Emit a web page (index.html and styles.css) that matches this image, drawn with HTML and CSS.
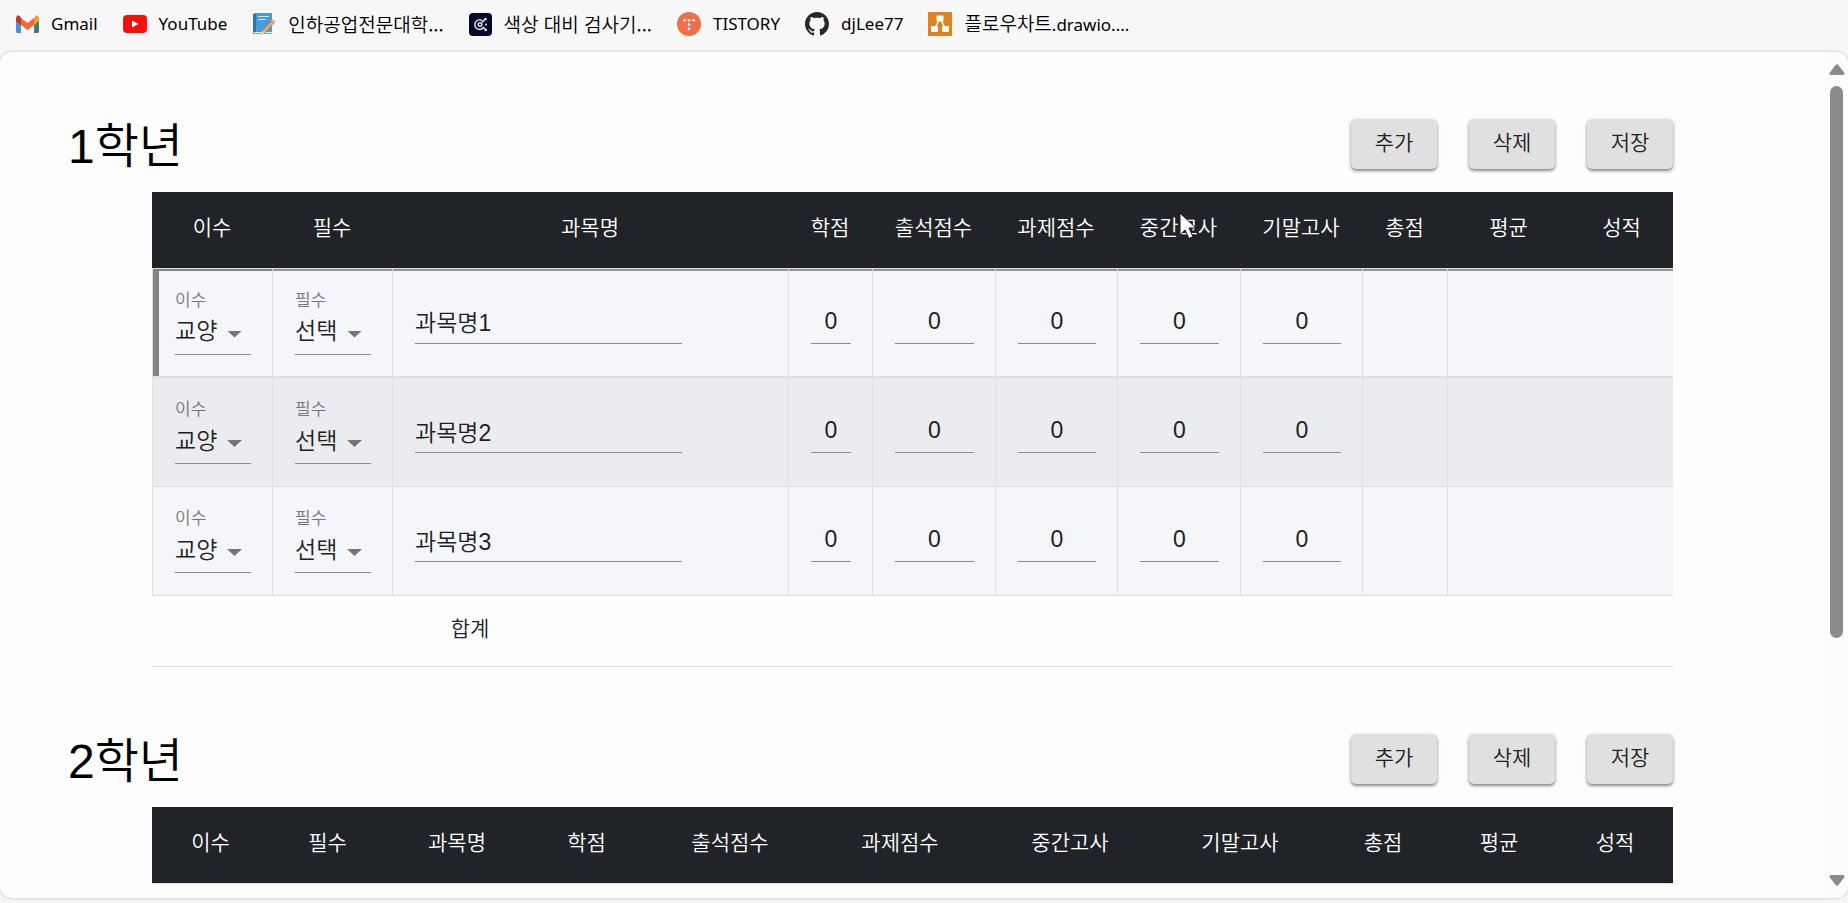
FILE: index.html
```html
<!DOCTYPE html>
<html lang="ko">
<head>
<meta charset="utf-8">
<title>학점 관리</title>
<link rel="stylesheet" href="styles.css">
</head>
<body>
<nav class="bookmarks" aria-label="북마크">
  <a href="#"><svg width="23" height="18" viewBox="0 0 23 18"><path fill="#4a8fd8" d="M0 3v13.500q0 1.500 1.500 1.500H5V7z"/><path fill="#4c7a72" d="M23 3v13.500q0 1.500-1.500 1.500H18V7z"/><path fill="#c5311f" d="M0 3v3l5 4V3L3.500 1Q1-1 0 3z"/><path fill="#f0a02a" d="M23 3v3l-5 4V3l1.500-2Q22-1 23 3z"/><path fill="#ee6a3b" d="M5 3l6.500 5L18 3v7l-6.500 5L5 10z"/></svg><span>Gmail</span></a>
  <a href="#"><svg width="24" height="18" viewBox="0 0 24 18"><rect width="24" height="18" rx="4" fill="#fb0f0c"/><path fill="#fff" d="M9 5.500v7l6.500-3.500z"/></svg><span>YouTube</span></a>
  <a href="#" class="ko"><svg width="24" height="24" viewBox="0 0 24 24"><path fill="#4a9ad8" d="M1 2l2-1h17v21H1z"/><path fill="#2f76ad" d="M1 2h3v18H1z"/><path fill="#e6f2fa" d="M2 20h18v1.200H2z"/><path stroke="#d5eaf8" d="M6 4.500h11M6 7.500h8"/><path fill="#e9863a" d="M20 8l3 2.500L12.500 21.500l-4 2L10 19z"/><path stroke="#fbe3c8" d="M20.500 10.500L11.500 20"/><path fill="#f5dcc0" d="M10 19l2.500 2.500-4 2z"/><path fill="#b9bcc0" d="M19 9l1.800-2 3 2.500-1.800 2z"/></svg><span>인하공업전문대학...</span></a>
  <a href="#" class="ko"><svg width="23" height="23" viewBox="0 0 23 23"><rect width="23" height="23" rx="4" fill="#07082a"/><g fill="none" stroke="#e8e8ee" stroke-width="1.400"><path d="M13.500 7.800A4.800 4.800 0 1 0 14.500 14.500L16.500 16.500"/><path d="M13 9.500l3.200-3.200"/><circle cx="11" cy="11.500" r="1.800"/></g><circle cx="16.500" cy="6" r="1.200" fill="#e8e8ee"/><circle cx="17" cy="11.500" r="1" fill="#e8e8ee"/><circle cx="16.800" cy="17" r="1.200" fill="#e8e8ee"/></svg><span>색상 대비 검사기...</span></a>
  <a href="#"><svg width="24" height="24" viewBox="0 0 24 24"><circle cx="12" cy="12" r="12" fill="#ed704b"/><g fill="#fff"><circle cx="7.500" cy="8.300" r="1.300"/><circle cx="12" cy="8.300" r="1.300"/><circle cx="16.500" cy="8.300" r="1.300"/><circle cx="12" cy="12.500" r="1.300"/><circle cx="12" cy="16.700" r="1.300"/></g></svg><span>TISTORY</span></a>
  <a href="#"><svg width="24" height="24" viewBox="0 0 16 16"><path fill="#24292e" d="M8 0C3.580 0 0 3.580 0 8c0 3.540 2.290 6.530 5.470 7.590.4.070.55-.17.55-.38 0-.19-.01-.82-.01-1.490-2.010.37-2.530-.49-2.690-.94-.09-.23-.48-.94-.82-1.130-.28-.15-.68-.52-.01-.53.63-.01 1.080.58 1.230.82.72 1.210 1.870.87 2.330.66.07-.52.28-.87.51-1.070-1.780-.2-3.640-.89-3.640-3.950 0-.87.31-1.590.82-2.150-.08-.2-.36-1.020.08-2.120 0 0 .67-.21 2.200.82.64-.18 1.320-.27 2-.27s1.360.09 2 .27c1.530-1.040 2.200-.82 2.200-.82.44 1.100.16 1.920.08 2.120.51.56.82 1.270.82 2.150 0 3.070-1.870 3.750-3.650 3.950.29.25.54.73.54 1.480 0 1.070-.01 1.930-.01 2.200 0 .21.15.46.55.38A8.010 8.010 0 0016 8c0-4.420-3.580-8-8-8z"/></svg><span>djLee77</span></a>
  <a href="#" class="mixed"><svg width="24" height="24" viewBox="0 0 24 24"><rect width="24" height="24" rx="1" fill="#e3801f"/><path stroke="#fff" stroke-width="1.500" d="M11 8l-4 8M13 8l4 8"/><g fill="#fff"><rect x="8.500" y="3.500" width="7" height="6" rx="1"/><rect x="3" y="14" width="7" height="6" rx="1"/><rect x="14" y="14" width="7" height="6" rx="1"/></g></svg><span><span class="hangul">플로우차트</span>.drawio....</span></a>
</nav>

<div class="panel">
  <main class="content">
    <section class="year">
      <header class="year-head">
        <h1>1학년</h1>
        <div class="actions"><button type="button">추가</button><button type="button">삭제</button><button type="button">저장</button></div>
      </header>
      <table class="grades">
        <colgroup><col class="w-select"><col class="w-select"><col><col class="w-credit"><col class="w-score"><col class="w-exam"><col class="w-score"><col class="w-exam"><col class="w-total"><col class="w-score"><col class="w-grade"></colgroup>
        <thead><tr><th>이수</th><th>필수</th><th>과목명</th><th>학점</th><th>출석점수</th><th>과제점수</th><th>중간고사</th><th>기말고사</th><th>총점</th><th>평균</th><th>성적</th></tr></thead>
        <tbody>
          <tr class="active">
            <td><label class="pick"><span>이수</span><select><option>교양</option><option>전공</option></select></label></td>
            <td><label class="pick"><span>필수</span><select><option>선택</option><option>필수</option></select></label></td>
            <td><input class="name" aria-label="과목명" value="과목명1"></td>
            <td><input aria-label="학점" value="0"></td><td><input aria-label="출석점수" value="0"></td><td><input aria-label="과제점수" value="0"></td><td><input aria-label="중간고사" value="0"></td><td><input aria-label="기말고사" value="0"></td>
            <td></td><td colspan="2"></td>
          </tr>
          <tr>
            <td><label class="pick"><span>이수</span><select><option>교양</option><option>전공</option></select></label></td>
            <td><label class="pick"><span>필수</span><select><option>선택</option><option>필수</option></select></label></td>
            <td><input class="name" aria-label="과목명" value="과목명2"></td>
            <td><input aria-label="학점" value="0"></td><td><input aria-label="출석점수" value="0"></td><td><input aria-label="과제점수" value="0"></td><td><input aria-label="중간고사" value="0"></td><td><input aria-label="기말고사" value="0"></td>
            <td></td><td colspan="2"></td>
          </tr>
          <tr>
            <td><label class="pick"><span>이수</span><select><option>교양</option><option>전공</option></select></label></td>
            <td><label class="pick"><span>필수</span><select><option>선택</option><option>필수</option></select></label></td>
            <td><input class="name" aria-label="과목명" value="과목명3"></td>
            <td><input aria-label="학점" value="0"></td><td><input aria-label="출석점수" value="0"></td><td><input aria-label="과제점수" value="0"></td><td><input aria-label="중간고사" value="0"></td><td><input aria-label="기말고사" value="0"></td>
            <td></td><td colspan="2"></td>
          </tr>
        </tbody>
        <tfoot><tr><td colspan="3">합계</td><td colspan="8"></td></tr></tfoot>
      </table>
    </section>

    <section class="year">
      <header class="year-head">
        <h1>2학년</h1>
        <div class="actions"><button type="button">추가</button><button type="button">삭제</button><button type="button">저장</button></div>
      </header>
      <table class="grades">
        <colgroup><col class="e-short"><col class="e-short"><col><col class="e-short"><col class="e-score"><col class="e-score"><col class="e-score"><col class="e-score"><col class="e-last"><col class="e-last"><col class="e-last"></colgroup>
        <thead><tr><th>이수</th><th>필수</th><th>과목명</th><th>학점</th><th>출석점수</th><th>과제점수</th><th>중간고사</th><th>기말고사</th><th>총점</th><th>평균</th><th>성적</th></tr></thead>
      </table>
    </section>
  </main>
  <div class="scrollbar" aria-hidden="true">
    <svg width="16" height="11" viewBox="0 0 16 11"><path fill="#8a8c8b" d="M6.500 1.200q1.500-1.700 3 0l5.700 7.300q1 2-1 2.500H1.800q-2-.5-1-2.500z"/></svg>
    <div class="track"><div class="thumb"></div></div>
    <svg width="16" height="11" viewBox="0 0 16 11"><path fill="#8a8c8b" d="M6.500 9.800q1.500 1.700 3 0l5.700-7.300q1-2-1-2.500H1.800q-2 .5-1 2.500z"/></svg>
  </div>
</div>
<svg class="cursor" width="19" height="28" viewBox="0 0 19 28"><path fill="#fff" stroke="#16181c" d="M1 1v22l5-5 4 8.500 4-2-4-8.500h7z"/></svg>
</body>
</html>
```

FILE: styles.css
```css
* { box-sizing: border-box; }

body {
  margin: 0;
  height: 100vh;
  padding-bottom: 5px;
  display: flex;
  flex-direction: column;
  overflow: hidden;
  background: #f6f6f6;
  color: #212121;
  font-family: "Liberation Sans", "Noto Sans CJK KR", sans-serif;
  font-weight: 350;
}

.bookmarks {
  height: 52px;
  padding: 0 16px 4px;
  display: flex;
  align-items: center;
  gap: 25px;
  background: #f7f7f7;
  font: 400 17px/24px "Noto Sans", "Noto Sans CJK KR", sans-serif;
}
.bookmarks a {
  display: flex;
  align-items: center;
  gap: 12px;
  color: #000;
  text-decoration: none;
  white-space: nowrap;
}
.bookmarks .ko,
.bookmarks .hangul {
  font-family: "Noto Sans CJK KR", sans-serif;
  font-size: 19px;
  font-weight: 350;
}

.panel {
  flex: 1;
  min-height: 0;
  display: flex;
  overflow: hidden;
  border-radius: 12px;
  background: #fdfdfd;
  box-shadow: 0 0 3px rgba(0, 0, 0, 0.25);
}
.content { flex: 1; min-width: 0; }

.year { padding: 67px 152px 0 68px; }
.year-head {
  height: 50px;
  margin-bottom: 23px;
  display: flex;
  align-items: center;
  justify-content: space-between;
}
h1 {
  margin: 0;
  padding-top: 6px;
  color: #000;
  font-size: 48px;
  font-weight: inherit;
  line-height: 50px;
}
.actions { display: flex; gap: 32px; }
.actions button {
  width: 86px;
  height: 50px;
  padding: 0 0 6px;
  border: 0;
  border-radius: 5px;
  background: #e0e0e0;
  box-shadow: 0 2px 3px rgba(0, 0, 0, 0.4), 0 1px 5px rgba(0, 0, 0, 0.12);
  color: #212121;
  font: inherit;
  font-size: 21px;
}

.grades {
  width: calc(100% - 84px);
  margin-left: 84px;
  table-layout: fixed;
  border-collapse: separate;
  border-spacing: 0;
  font-size: 21px;
  line-height: 28px;
}
.w-select { width: 120px; }
.w-credit { width: 84px; }
.w-score { width: 123px; }
.w-exam { width: 122px; }
.w-total { width: 85px; }
.w-grade { width: 103px; }
.e-short { width: 117px; }
.e-score { width: 170px; }
.e-last { width: 116px; }

th {
  height: 77px;
  padding: 0 0 5px;
  border-bottom: 1px solid #e0e0e0;
  background: #202328;
  color: #fff;
  font-weight: inherit;
}

tbody td {
  height: 109px;
  padding: 0 21px 2px 22px;
  border-left: 1px solid #e0e0e0;
  border-bottom: 1px solid #e0e0e0;
  background: #f5f6fa;
}
tbody tr:nth-child(even) td { background: #ebecef; }
tbody .active td { box-shadow: inset 0 2px #929292; border-bottom-width: 2px; }
tbody .active td:first-child { box-shadow: inset 6px 2px #858585; }

tfoot td {
  height: 71px;
  padding: 0 0 5px;
  border-bottom: 1px solid #e0e0e0;
  text-align: center;
}

.pick {
  position: relative;
  display: flex;
  flex-direction: column;
  color: #757575;
  font-size: 17px;
  line-height: 24px;
}
.pick::after {
  content: "";
  position: absolute;
  right: 9px;
  bottom: 17px;
  width: 15px;
  height: 7px;
  background: #757575;
  clip-path: polygon(0 0, 100% 0, 50% 100%);
  pointer-events: none;
}
.pick select { height: 42px; padding: 0 0 4px; }

input,
select {
  appearance: none;
  display: block;
  width: 100%;
  height: 44px;
  padding: 0;
  border: 0;
  border-bottom: 1px solid #8c8c90;
  border-radius: 0;
  outline: 0;
  background: transparent;
  color: #212121;
  font: inherit;
  font-size: 23px;
  text-align: center;
}
select { text-align: left; }
input.name { width: 267px; max-width: 100%; text-align: left; }

.scrollbar {
  width: 23px;
  padding: 12px 0;
  display: flex;
  flex-direction: column;
  align-items: center;
  gap: 11px;
  background: #fcfcfc;
}
.track { flex: 1; }
.thumb {
  width: 13px;
  height: 71%;
  border-radius: 7px;
  background: #8a8c8b;
}

.cursor {
  position: absolute;
  left: 1179px;
  top: 212px;
}
```
